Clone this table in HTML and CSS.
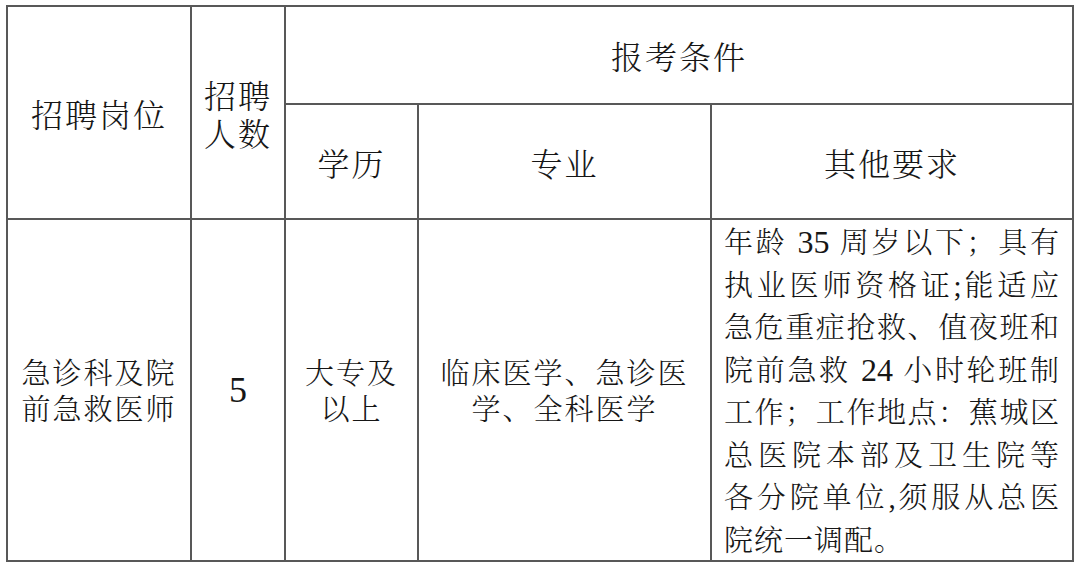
FILE: index.html
```html
<!DOCTYPE html>
<html lang="zh-CN">
<head>
<meta charset="utf-8">
<title>招聘岗位</title>
<link rel="stylesheet" href="styles.css">
</head>
<body>
<table class="t">
  <colgroup>
    <col class="c1"><col class="c2"><col class="c3"><col class="c4"><col class="c5">
  </colgroup>
  <tr class="r1">
    <th rowspan="2">招聘岗位</th>
    <th rowspan="2">招聘<br>人数</th>
    <th colspan="3">报考条件</th>
  </tr>
  <tr class="r2">
    <th>学历</th>
    <th>专业</th>
    <th>其他要求</th>
  </tr>
  <tr class="r3">
    <td>急诊科及院<br>前急救医师</td>
    <td class="num">5</td>
    <td>大专及<br>以上</td>
    <td>临床医学、急诊医<br>学、全科医学</td>
    <td class="req">
      <span class="ln">年龄 <span class="d">35</span> 周岁以下；具有</span>
      <span class="ln">执业医师资格证<span class="p">;</span>能适应</span>
      <span class="ln">急危重症抢救、值夜班和</span>
      <span class="ln">院前急救 <span class="d">24</span> 小时轮班制</span>
      <span class="ln">工作；工作地点：蕉城区</span>
      <span class="ln">总医院本部及卫生院等</span>
      <span class="ln">各分院单位<span class="p">,</span>须服从总医</span>
      <span class="ln last">院统一调配。</span>
    </td>
  </tr>
</table>
</body>
</html>
```

FILE: styles.css
```css
html, body {
  margin: 0;
  background: #ffffff;
}

body {
  padding: 5px 0 0 6px;
  font-family: "Noto Serif CJK SC", "Noto Sans CJK SC", serif;
  color: #161616;
}

.t {
  border-collapse: separate;
  border-spacing: 0;
  table-layout: fixed;
  width: 1068px;
  border-top: 2px solid #585858;
  border-left: 2px solid #585858;
}

.c1 { width: 184px; }
.c2 { width: 94px; }
.c3 { width: 133px; }
.c4 { width: 293px; }
.c5 { width: 362px; }

.r1 { height: 98px; }
.r2 { height: 115px; }
.r3 { height: 342px; }

.t th,
.t td {
  border-right: 2px solid #585858;
  border-bottom: 2px solid #585858;
  padding: 0;
  text-align: center;
  vertical-align: middle;
  font-weight: 300;
}

.t th {
  font-size: 32px;
  letter-spacing: 2px;
  line-height: 38px;
}

.t td {
  font-size: 29px;
  letter-spacing: 2px;
  line-height: 36px;
}

.t td.num {
  font-family: "Liberation Serif", serif;
  font-weight: 400;
  font-size: 36px;
  letter-spacing: 0;
}

.t td.req {
  text-align: left;
  padding: 0 12px 0 12px;
  line-height: 42.5px;
  letter-spacing: 1px;
}

.ln {
  display: block;
  text-align: justify;
  text-align-last: justify;
}

.ln.last {
  text-align-last: left;
}

.d,
.p {
  font-family: "Liberation Serif", serif;
  font-weight: 400;
  line-height: 0;
  letter-spacing: 0;
}

.d {
  font-size: 32px;
}
```
